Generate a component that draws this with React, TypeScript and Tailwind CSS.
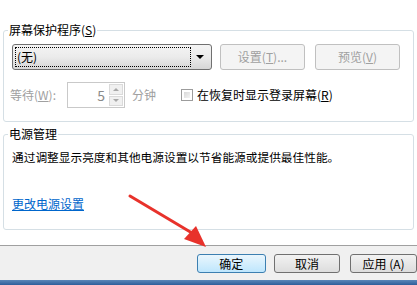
import React from "react";

const font = { fontFamily: '"Noto Sans CJK SC", "Noto Sans", sans-serif' };

function Arrow() {
  // red annotation arrow pointing at 确定
  return (
    <svg className="absolute left-0 top-0 pointer-events-none" width="417" height="285" viewBox="0 0 417 285">
      <path d="M130 196 L192 233" stroke="#e8322b" strokeWidth="3" strokeLinecap="round" />
      <polygon points="206,247 184,239 196,226" fill="#e8322b" />
    </svg>
  );
}

export default function App() {
  return (
    <div className="relative w-[417px] h-[285px] overflow-hidden bg-white flex flex-col text-[12px] leading-[16px] text-black" style={font}>
      <fieldset className="mt-[22px] ml-[3px] w-[411px] border border-[#d5dfe5] rounded-[3px] px-[8px] pb-[13px]">
        <legend className="-ml-[4px] px-[1px] bg-white">
          屏幕保护程序(<span className="underline">S</span>)
        </legend>
        <div className="flex items-center gap-[8px] mt-[6px] h-[26px]">
          <div className="w-[200px] h-[26px] flex rounded-[3px] border border-[#707070] bg-gradient-to-b from-[#f4f4f4] via-[#ebebeb] to-[#d6d6d6] p-[2px]">
            <div className="flex-1 border border-dotted border-black flex items-center pl-[1px]">(无)</div>
            <div className="w-[18px] flex items-center justify-center">
              <div className="w-0 h-0 border-l-[4px] border-r-[4px] border-t-[4px] border-l-transparent border-r-transparent border-t-black" />
            </div>
          </div>
          <button className="w-[85px] h-[26px] rounded-[3px] border border-[#c0c0c0] bg-[#f4f4f4] text-[#a0a0a0]">
            设置(<span className="underline">T</span>)...
          </button>
          <button className="ml-[2px] w-[85px] h-[26px] rounded-[3px] border border-[#c0c0c0] bg-[#f4f4f4] text-[#a0a0a0]">
            预览(<span className="underline">V</span>)
          </button>
        </div>
        <div className="flex items-center mt-[12px] h-[26px]">
          <span className="-ml-[2px] w-[57px] text-[#a0a0a0]">
            等待(<span className="underline">W</span>):
          </span>
          <div className="w-[58px] h-[26px] flex border border-[#c9c9c9] bg-white">
            <div className="flex-1 flex items-center justify-end pr-[3px] text-[14px] text-[#8a8a8a]">5</div>
            <div className="w-[16px] flex flex-col gap-[1px] p-[1px]">
              <div className="flex-1 bg-[#f0f0f0] border border-[#dadada] flex items-center justify-center">
                <div className="w-0 h-0 border-l-[3px] border-r-[3px] border-b-[3px] border-l-transparent border-r-transparent border-b-[#a8a8a8]" />
              </div>
              <div className="flex-1 bg-[#f0f0f0] border border-[#dadada] flex items-center justify-center">
                <div className="w-0 h-0 border-l-[3px] border-r-[3px] border-t-[3px] border-l-transparent border-r-transparent border-t-[#a8a8a8]" />
              </div>
            </div>
          </div>
          <span className="ml-[7px] text-[#a0a0a0]">分钟</span>
          <div className="ml-[25px] w-[12px] h-[12px] border border-[#9c9c9c] p-[2px] bg-white">
            <div className="w-full h-full bg-gradient-to-br from-[#d8d8d8] to-[#f4f4f4]" />
          </div>
          <span className="ml-[4px]">
            在恢复时显示登录屏幕(<span className="underline">R</span>)
          </span>
        </div>
      </fieldset>

      <fieldset className="mt-[4px] ml-[3px] w-[411px] border border-[#d5dfe5] rounded-[3px] px-[8px] pb-[17px]">
        <legend className="-ml-[4px] px-[1px] bg-white">电源管理</legend>
        <p className="mt-[7px] text-[11.7px]">通过调整显示亮度和其他电源设置以节省能源或提供最佳性能。</p>
        <a className="block mt-[31px] text-[#0066cc] underline w-fit">更改电源设置</a>
      </fieldset>

      <div className="mt-auto h-[35px] bg-[#f0f0f0] border-t border-[#a0a0a0] flex items-start pt-[8px] pl-[197px] gap-[8px]">
        <button className="w-[73px] h-[19px] rounded-[3px] border border-[#3c7fb1] bg-gradient-to-b from-[#eaf6fd] to-[#bee6fd] leading-[17px]">确定</button>
        <button className="w-[71px] h-[19px] rounded-[3px] border border-[#707070] bg-gradient-to-b from-[#f2f2f2] to-[#dddddd] leading-[17px]">取消</button>
        <button className="ml-[2px] w-[71px] h-[19px] rounded-[3px] border border-[#707070] bg-gradient-to-b from-[#f2f2f2] to-[#dddddd] leading-[17px]">应用 (A)</button>
      </div>
      <div className="h-[5px] bg-gradient-to-b from-[#5a86b8] to-[#2d5d9a]" />
      <Arrow />
    </div>
  );
}
